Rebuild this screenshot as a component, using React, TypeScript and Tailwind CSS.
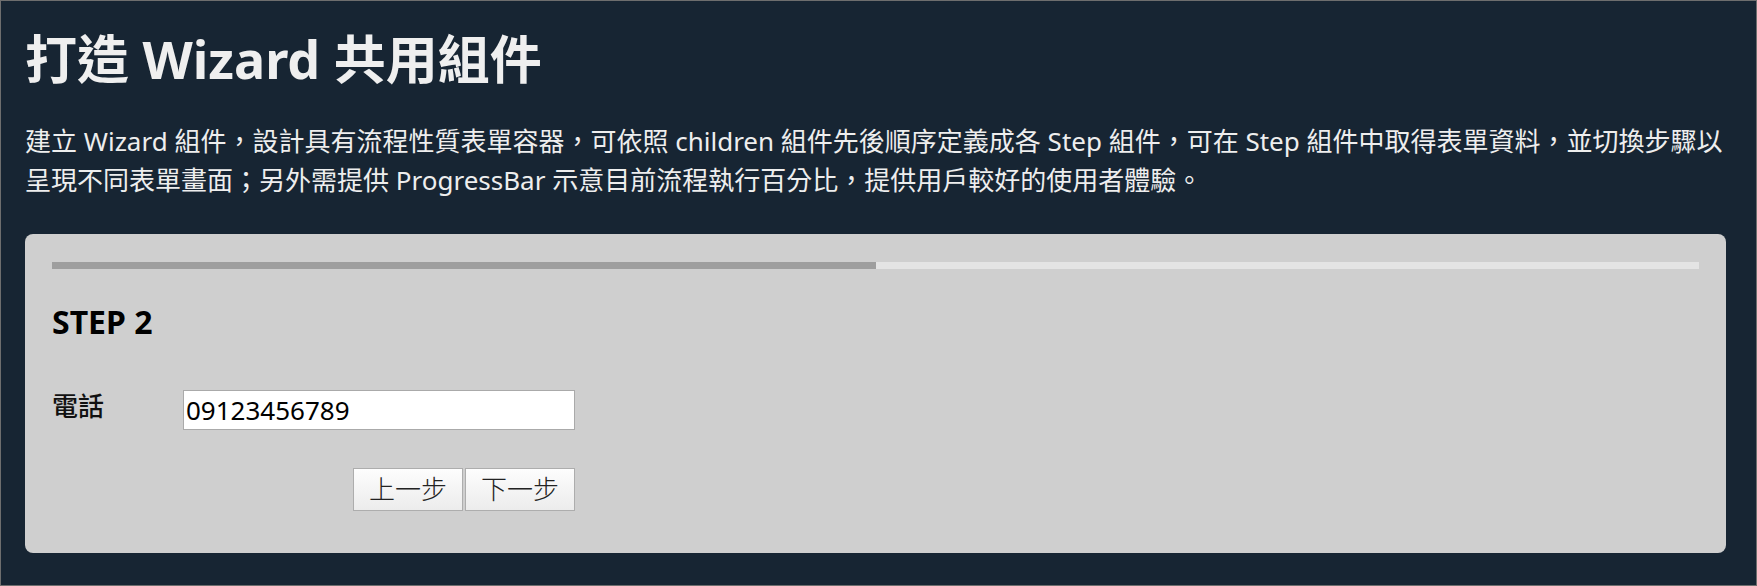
import React from "react";

export default function App() {
  return (
    <div
      lang="zh-TW"
      className="w-[1757px] h-[586px] bg-[#172533] border border-[#6e6e6e] pl-[24px] pr-[30px] overflow-hidden"
      style={{ fontFamily: '"Noto Sans", "Noto Sans CJK TC", sans-serif' }}
    >
      <h1 className="mt-[27px] text-[52px] leading-[62px] font-bold text-[#efefef]">
        打造 Wizard 共用組件
      </h1>
      <p className="mt-[32px] text-[26px] leading-[39px] text-[#eeeeee]">
        建立 Wizard 組件，設計具有流程性質表單容器，可依照 children 組件先後順序定義成各 Step 組件，可在 Step 組件中取得表單資料，並切換步驟以呈現不同表單畫面；另外需提供 ProgressBar 示意目前流程執行百分比，提供用戶較好的使用者體驗。
      </p>
      <div className="mt-[34px] h-[319px] rounded-[8px] bg-[#cfcfcf] px-[27px] pt-[28px]">
        <div className="flex h-[7px] bg-[#e4e4e4]">
          <div className="h-full w-1/2 bg-[#9e9e9e]" />
        </div>
        <h3 className="mt-[30px] text-[32px] leading-[46px] font-bold text-black">STEP 2</h3>
        <div className="mt-[45px] flex items-start">
          <label className="w-[131px] text-[26px] leading-[33px] font-medium text-[#111]">電話</label>
          <input
            readOnly
            value="09123456789"
            className="w-[392px] h-[40px] bg-white border border-[#aaaaaa] px-[2px] text-[26px] text-black outline-none"
            style={{ fontFamily: '"Noto Sans", "Noto Sans CJK TC", sans-serif' }}
          />
        </div>
        <div className="mt-[38px] flex w-[523px] justify-end gap-[2px]">
          <button className="w-[110px] h-[43px] border border-[#adadad] bg-gradient-to-b from-[#fdfdfd] to-[#ececec] text-[26px] font-light text-[#222]">
            上一步
          </button>
          <button className="w-[110px] h-[43px] border border-[#adadad] bg-gradient-to-b from-[#fdfdfd] to-[#ececec] text-[26px] font-light text-[#222]">
            下一步
          </button>
        </div>
      </div>
    </div>
  );
}
